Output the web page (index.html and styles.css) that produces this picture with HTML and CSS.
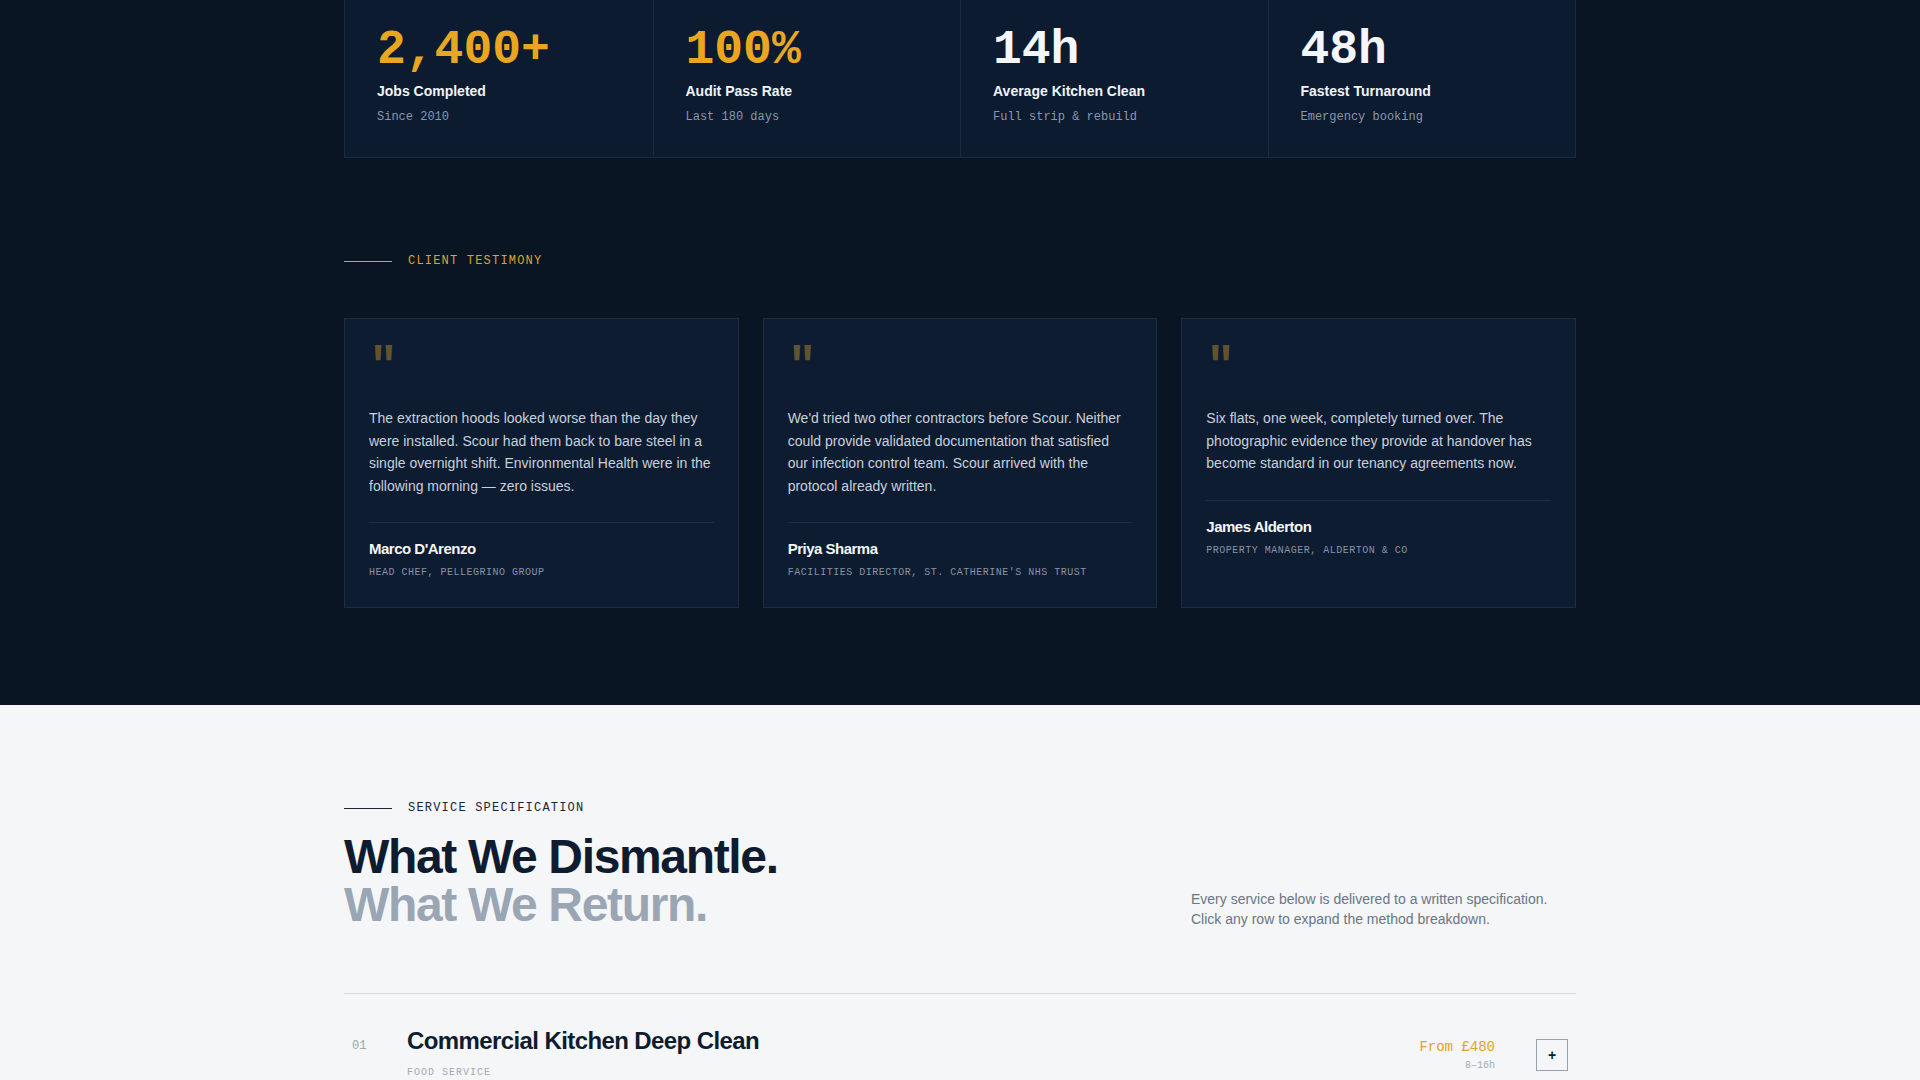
FILE: index.html
```html
<!DOCTYPE html>
<html lang="en">
<head>
<meta charset="utf-8">
<title>Scour — Specification</title>
<link rel="stylesheet" href="styles.css">
</head>
<body>
<section class="dark">
  <div class="container">
    <div class="stats">
      <div class="stat">
        <div class="stat-num accent">2,400+</div>
        <div class="stat-label">Jobs Completed</div>
        <div class="stat-sub">Since 2010</div>
      </div>
      <div class="stat">
        <div class="stat-num accent">100%</div>
        <div class="stat-label">Audit Pass Rate</div>
        <div class="stat-sub">Last 180 days</div>
      </div>
      <div class="stat">
        <div class="stat-num">14h</div>
        <div class="stat-label">Average Kitchen Clean</div>
        <div class="stat-sub">Full strip &amp; rebuild</div>
      </div>
      <div class="stat">
        <div class="stat-num">48h</div>
        <div class="stat-label">Fastest Turnaround</div>
        <div class="stat-sub">Emergency booking</div>
      </div>
    </div>

    <div class="testimony">
      <div class="eyebrow eyebrow-gold"><span class="eyebrow-line"></span><span>CLIENT TESTIMONY</span></div>
      <div class="cards">
        <figure class="card">
          <div class="quote-mark">"</div>
          <blockquote class="quote">The extraction hoods looked worse than the day they were installed. Scour had them back to bare steel in a single overnight shift. Environmental Health were in the following morning — zero issues.</blockquote>
          <figcaption class="card-foot">
            <div class="name">Marco D'Arenzo</div>
            <div class="role">HEAD CHEF, PELLEGRINO GROUP</div>
          </figcaption>
        </figure>
        <figure class="card">
          <div class="quote-mark">"</div>
          <blockquote class="quote">We'd tried two other contractors before Scour. Neither could provide validated documentation that satisfied our infection control team. Scour arrived with the protocol already written.</blockquote>
          <figcaption class="card-foot">
            <div class="name">Priya Sharma</div>
            <div class="role">FACILITIES DIRECTOR, ST. CATHERINE'S NHS TRUST</div>
          </figcaption>
        </figure>
        <figure class="card">
          <div class="quote-mark">"</div>
          <blockquote class="quote">Six flats, one week, completely turned over. The photographic evidence they provide at handover has become standard in our tenancy agreements now.</blockquote>
          <figcaption class="card-foot">
            <div class="name">James Alderton</div>
            <div class="role">PROPERTY MANAGER, ALDERTON &amp; CO</div>
          </figcaption>
        </figure>
      </div>
    </div>
  </div>
</section>

<section class="light">
  <div class="container">
    <div class="spec-head">
      <div class="spec-title-block">
        <div class="eyebrow eyebrow-dark"><span class="eyebrow-line"></span><span>SERVICE SPECIFICATION</span></div>
        <h2 class="spec-title"><span class="t1">What We Dismantle.</span><span class="t2">What We Return.</span></h2>
      </div>
      <p class="spec-desc">Every service below is delivered to a written specification. Click any row to expand the method breakdown.</p>
    </div>

    <div class="services">
      <div class="service-row">
        <div class="service-main">
          <span class="service-num">01</span>
          <div class="service-text">
            <h3 class="service-name">Commercial Kitchen Deep Clean</h3>
            <div class="service-cat">FOOD SERVICE</div>
          </div>
        </div>
        <div class="service-price">
          <div class="price">From £480</div>
          <div class="hours">8–16h</div>
        </div>
        <button class="toggle" type="button">+</button>
      </div>
    </div>
  </div>
</section>
</body>
</html>
```

FILE: styles.css
```css
* { box-sizing: border-box; }

html, body {
  margin: 0;
  padding: 0;
}

body {
  font-family: "Liberation Sans", Arial, sans-serif;
  background: #f4f6f8;
  -webkit-font-smoothing: antialiased;
}

.container {
  width: 1232px;
  margin: 0 auto;
}

/* ---------- dark section ---------- */
.dark {
  background: #0a1523;
  padding-bottom: 97px;
}

.stats {
  display: grid;
  grid-template-columns: repeat(4, 1fr);
  border: 1px solid #1b2a3f;
  border-top: none;
  background: #0c1b30;
}

.stat {
  padding: 26px 32px 31px;
  border-left: 1px solid #1b2a3f;
}
.stat:first-child { border-left: none; }

.stat-num {
  font-family: "Liberation Mono", monospace;
  font-weight: 700;
  font-size: 48px;
  line-height: 1;
  color: #f4f6f9;
}
.stat-num.accent { color: #e9a620; }

.stat-label {
  margin-top: 7px;
  font-size: 14px;
  font-weight: 700;
  line-height: 21px;
  color: #f1f4f8;
}

.stat-sub {
  margin-top: 6px;
  font-family: "Liberation Mono", monospace;
  font-size: 12px;
  line-height: 18px;
  color: #8a97a9;
}

.testimony {
  padding-top: 94px;
}

.eyebrow {
  display: flex;
  align-items: center;
  gap: 16px;
  font-family: "Liberation Mono", monospace;
  font-size: 12px;
  line-height: 18px;
  letter-spacing: 0.1em;
}
.eyebrow-line {
  width: 48px;
  height: 1px;
  display: block;
}
.eyebrow-gold { color: #d9a42c; }
.eyebrow-gold .eyebrow-line { background: #d9a42c; }
.eyebrow-dark { color: #1a2536; }
.eyebrow-dark .eyebrow-line { background: #1a2536; }

.cards {
  margin-top: 48px;
  display: grid;
  grid-template-columns: repeat(3, 1fr);
  gap: 24px;
}

.card {
  margin: 0;
  background: #0e1c31;
  border: 1px solid #1e2c41;
  padding: 24px 24px 27px;
  display: flex;
  flex-direction: column;
}

.quote-mark {
  font-family: "Liberation Mono", monospace;
  font-size: 48px;
  font-weight: 700;
  line-height: 1;
  color: rgba(217, 164, 44, 0.42);
  height: 48px;
}

.quote {
  margin: 16px 0 0;
  font-size: 14px;
  line-height: 22.6px;
  color: #c8d0db;
}

.card-foot {
  margin-top: 25px;
  border-top: 1px solid #1f2d43;
  padding-top: 15px;
}

.name {
  font-size: 15px;
  font-weight: 700;
  line-height: 21px;
  letter-spacing: -0.5px;
  color: #f3f5f8;
}

.role {
  margin-top: 6px;
  font-family: "Liberation Mono", monospace;
  font-size: 10px;
  line-height: 15px;
  letter-spacing: 0.05em;
  color: #8793a6;
}

/* ---------- light section ---------- */
.light {
  background: #f4f6f8;
  padding-top: 94px;
  padding-bottom: 40px;
}

.spec-head {
  display: flex;
  justify-content: space-between;
  align-items: flex-end;
}

.spec-title {
  margin: 16px 0 0;
  font-size: 48px;
  font-weight: 700;
  line-height: 48px;
  letter-spacing: -0.028em;
}
.spec-title span { display: block; }
.spec-title .t1 { color: #0f1c2f; }
.spec-title .t2 { color: #9ba6b4; }

.spec-desc {
  margin: 0;
  width: 385px;
  font-size: 14px;
  line-height: 20px;
  color: #6b7584;
}

.services {
  margin-top: 64px;
  border-top: 1px solid #d5dae1;
}

.service-row {
  display: flex;
  align-items: center;
  padding: 31px 8px 32px;
  border-bottom: 1px solid #d5dae1;
}

.service-main {
  flex: 1;
  display: flex;
  align-items: baseline;
}

.service-num {
  width: 55px;
  flex: none;
  font-family: "Liberation Mono", monospace;
  font-size: 12px;
  color: #9ca4af;
}

.service-name {
  margin: 0;
  font-size: 24px;
  font-weight: 700;
  line-height: 31px;
  letter-spacing: -0.025em;
  color: #0f1c2f;
}

.service-cat {
  margin-top: 9px;
  margin-bottom: 4px;
  font-family: "Liberation Mono", monospace;
  font-size: 10px;
  line-height: 15px;
  letter-spacing: 0.1em;
  color: #a3aab4;
}

.service-price {
  text-align: right;
  margin-right: 41px;
  font-family: "Liberation Mono", monospace;
}

.price {
  font-size: 14px;
  line-height: 20px;
  color: #dfa42a;
}

.hours {
  margin-top: 1px;
  font-size: 10px;
  line-height: 15px;
  color: #a4abb5;
}

.toggle {
  width: 32px;
  height: 32px;
  padding: 0;
  border: 1px solid #98a1ad;
  background: transparent;
  font-family: "Liberation Sans", Arial, sans-serif;
  font-size: 14px;
  font-weight: 700;
  line-height: 1;
  color: #0f1c2f;
  cursor: pointer;
}
```
